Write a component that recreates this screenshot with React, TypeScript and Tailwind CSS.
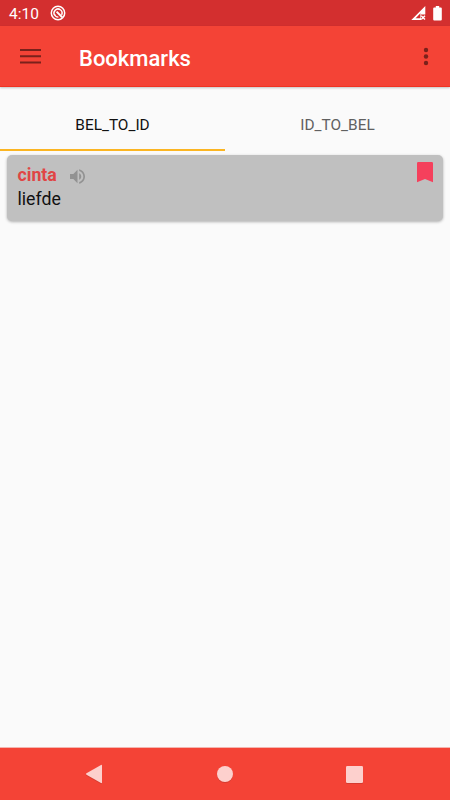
const tabs = ["BEL_TO_ID", "ID_TO_BEL"];

const bookmarks = [{ word: "cinta", translation: "liefde" }];

function StatusBar() {
  return (
    <div className="flex h-[26px] shrink-0 items-center bg-[#d32f2f] pl-[9px] pr-2 text-white">
      <span className="mt-[4px] w-[30px] text-[15.5px] leading-none whitespace-nowrap">4:10</span>
      <svg className="ml-[11px] size-4" viewBox="0 0 16 16" fill="none">
        <circle cx="8" cy="8" r="6.7" stroke="#fff" strokeWidth="1.5" />
        <path d="M4.8 10.4A4 4 0 1 1 11.6 9.8" stroke="#fff" strokeWidth="1.5" />
        <path d="M6.6 6.6L12.2 12.2" stroke="#fff" strokeWidth="2" />
        <path d="M4.6 9.6A4 4 0 0 0 8.4 12.2" stroke="#fff" strokeWidth="1.3" />
      </svg>
      <svg className="ml-auto h-[15px] w-[15px]" viewBox="0 0 15 15" fill="none">
        <path d="M14.3 0v8.4H10V14H0.3z" fill="#fff" />
        <path d="M9.4 7.2v5H4.6z" fill="#d32f2f" />
        <path d="M10.2 9.7l3.8 3.8M14 9.7l-3.8 3.8" stroke="#fff" strokeWidth="1.4" />
      </svg>
      <svg className="ml-[7px] h-[15px] w-[9px]" viewBox="0 0 9 15" fill="#fff">
        <path d="M2.8 0h3.4v1.5h1.6q1 0 1 1v11q0 1-1 1H1.2q-1 0-1-1v-11q0-1 1-1h1.6z" />
      </svg>
    </div>
  );
}

function AppBar() {
  return (
    <header className="relative z-10 flex h-[61px] shrink-0 items-center border-b border-[#f03322] bg-[#f44336] pl-5 pr-[21px] shadow-[0_1px_2px_rgba(0,0,0,0.22)]">
      <svg className="mt-px h-[15px] w-[21px]" viewBox="0 0 21 15" fill="#7a211b">
        <path d="M0 0h21v2H0zM0 6.2h21v2H0zM0 12.4h21v2H0z" />
      </svg>
      <h1 className="ml-[38px] mt-[5px] text-[22px] leading-none font-medium text-white">Bookmarks</h1>
      <svg className="ml-auto mt-px h-[19px] w-[6px]" viewBox="0 0 6 19" fill="#7a211b">
        <circle cx="3" cy="3" r="2.2" />
        <circle cx="3" cy="9.5" r="2.2" />
        <circle cx="3" cy="16" r="2.2" />
      </svg>
    </header>
  );
}

function BookmarkCard({ word, translation }: { word: string; translation: string }) {
  return (
    <article className="relative mx-[7px] mt-1 h-[66px] rounded-[5px] bg-[#c0c0c0] pl-[10.5px] pt-[8px] shadow-[0_1px_3px_rgba(0,0,0,0.3)]">
      <div className="flex h-[23px] items-center">
        <span className="mt-[2px] w-[52px] text-[17.7px] leading-none font-bold text-[#e04545]">{word}</span>
        <svg className="mt-[4px] h-[15px] w-[15px]" viewBox="3 3 18 18" fill="#929292">
          <path d="M3 9v6h4l5 5V4L7 9H3zm13.5 3c0-1.77-1.02-3.29-2.5-4.03v8.05c1.48-.73 2.5-2.25 2.5-4.02zM14 3.23v2.06c2.89.86 5 3.54 5 6.71s-2.11 5.85-5 6.71v2.06c4.01-.91 7-4.49 7-8.77s-2.99-7.86-7-8.77z" />
        </svg>
      </div>
      <p className="mt-px text-[17.7px] leading-6 text-[#111]">{translation}</p>
      <svg className="absolute top-[7px] right-[10px] h-[21px] w-4" viewBox="0 0 16 21" fill="#f5405c">
        <path d="M1.2 0h13.6q1.2 0 1.2 1.2V20.3L8 17 0 20.3V1.2Q0 0 1.2 0z" />
      </svg>
    </article>
  );
}

function NavBar() {
  return (
    <nav className="flex h-[53px] shrink-0 items-center justify-between border-t border-[#f3b5b0] bg-[#f44336] pl-[85px] pr-[87px]">
      <svg className="h-5 w-[18px] drop-shadow-[0_1px_0_rgba(0,0,0,0.12)]" viewBox="0 0 18 20" fill="#fdd0cd">
        <path d="M16 1q1-.5 1 .5v17q0 1-1 .5L1.5 10.7q-1-.7 0-1.4z" />
      </svg>
      <svg className="h-[18px] w-[18px] drop-shadow-[0_1px_0_rgba(0,0,0,0.12)]" viewBox="0 0 18 18" fill="#fdd0cd">
        <circle cx="9" cy="9" r="8" />
      </svg>
      <svg className="h-[17px] w-[17px] drop-shadow-[0_1px_0_rgba(0,0,0,0.12)]" viewBox="0 0 17 17" fill="#fdd0cd">
        <rect width="17" height="17" rx="1.3" />
      </svg>
    </nav>
  );
}

export default function App() {
  return (
    <div className="flex h-screen w-full flex-col overflow-hidden bg-[#fafafa] font-['Roboto',sans-serif]">
      <StatusBar />
      <AppBar />
      <div className="grid h-16 shrink-0 grid-cols-2">
        {tabs.map((tab, i) => (
          <button
            key={tab}
            className={`border-b-2 pt-[15px] text-[15.4px] leading-none ${
              i === 0 ? "border-[#fbb522] text-[#111]" : "border-transparent text-[#606060]"
            }`}
          >
            {tab}
          </button>
        ))}
      </div>
      <main className="flex-1">
        {bookmarks.map((b) => (
          <BookmarkCard key={b.word} {...b} />
        ))}
      </main>
      <NavBar />
    </div>
  );
}
